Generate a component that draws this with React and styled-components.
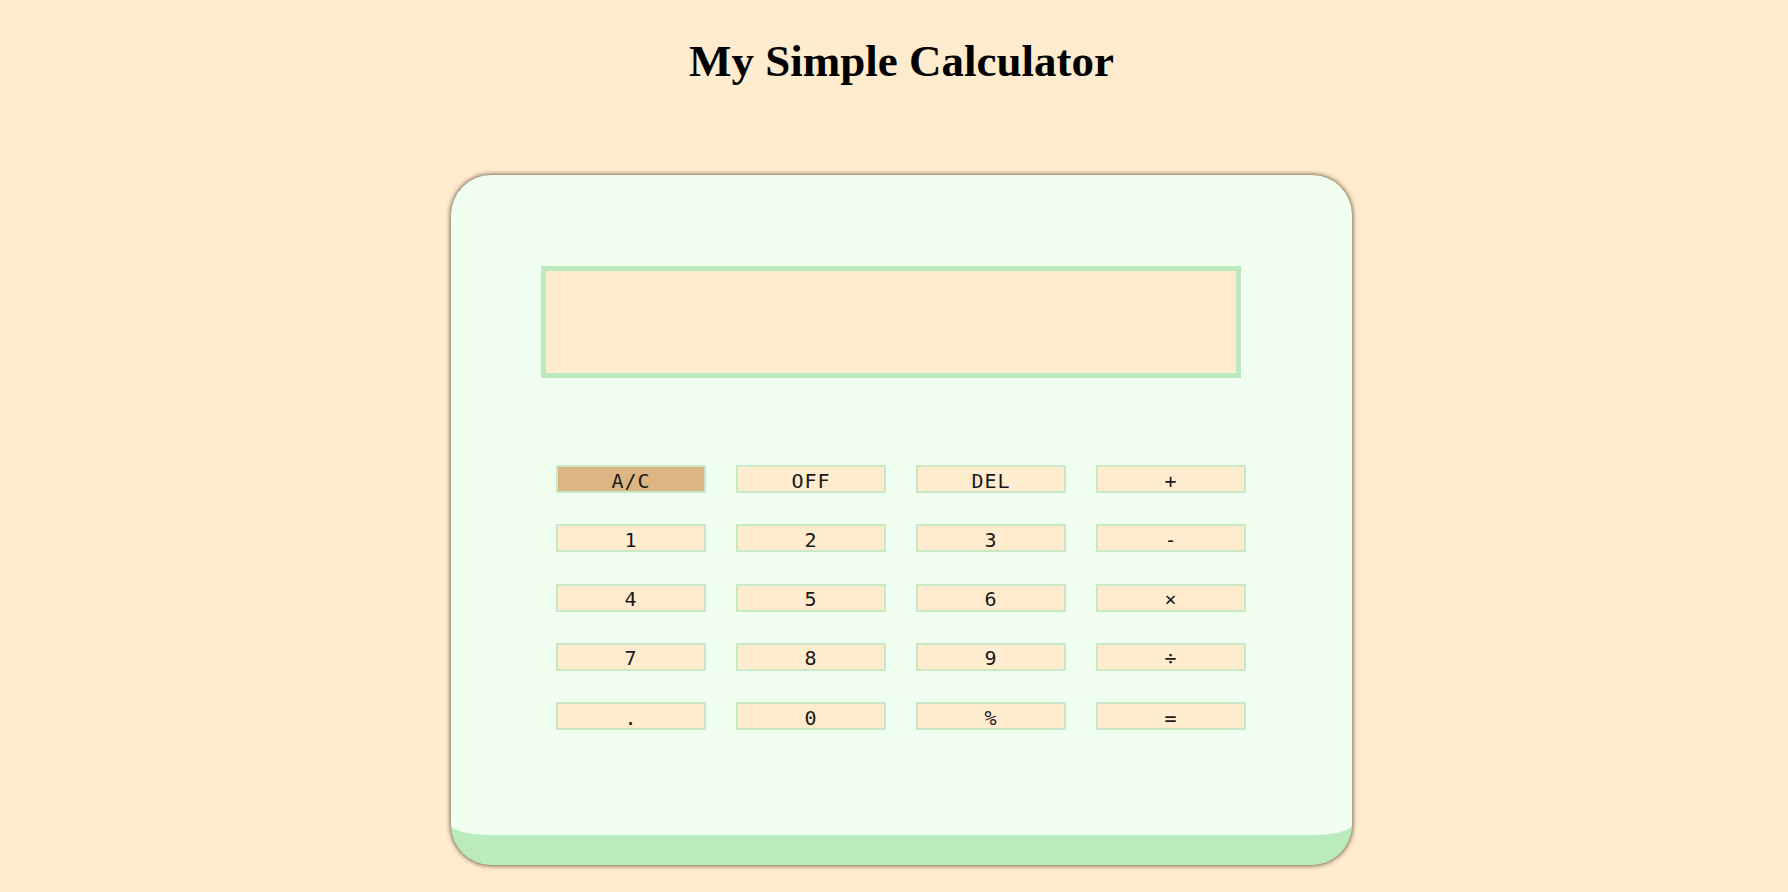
import React from "react";
import styled, { createGlobalStyle } from "styled-components";

const GlobalStyle = createGlobalStyle`
  html, body {
    margin: 0;
    padding: 0;
    background: #ffebcd;
  }
  body {
    font-family: "Liberation Serif", "Times New Roman", serif;
  }
`;

const Page = styled.main`
  box-sizing: border-box;
  width: 100%;
  min-height: 892px;
  padding-left: 15px;
  display: flex;
  flex-direction: column;
  align-items: center;
`;

const Title = styled.h1`
  margin: 35px 0 88px;
  font-family: "Liberation Serif", "Times New Roman", serif;
  font-size: 45px;
  font-weight: 700;
  line-height: 52px;
  color: #000;
`;

const Calculator = styled.section`
  box-sizing: border-box;
  width: 901px;
  height: 690px;
  padding: 91px 0 0 90px;
  background: #f0fff0;
  border-bottom: 30px solid #bbebbc;
  border-radius: 40px;
  box-shadow: 0 0 4px 1px rgba(80, 60, 40, 0.75);
  display: flex;
  flex-direction: column;
  align-items: flex-start;
`;

const Display = styled.div`
  box-sizing: border-box;
  width: 700px;
  height: 112px;
  background: #ffebcd;
  border: 5px solid #bde9be;
`;

const Keypad = styled.div`
  margin: 87px 0 0 15px;
  display: grid;
  grid-template-columns: repeat(4, 150px);
  grid-auto-rows: 28px;
  column-gap: 30px;
  row-gap: 31.25px;
`;

const Key = styled.button`
  box-sizing: border-box;
  height: 28px;
  margin: 0;
  padding: 3px 0 0;
  border: 2px solid #c8e9c6;
  border-radius: 0;
  background: ${(p) => (p.$accent ? "#ddb583" : "#ffebcd")};
  color: #1a1a1a;
  font-family: "DejaVu Sans Mono", "Liberation Mono", monospace;
  font-size: 20px;
  letter-spacing: 1px;
  line-height: 20px;
  text-align: center;
  cursor: pointer;
`;

const keys = [
  "A/C", "OFF", "DEL", "+",
  "1", "2", "3", "-",
  "4", "5", "6", "×",
  "7", "8", "9", "÷",
  ".", "0", "%", "=",
];

export default function App() {
  return (
    <>
      <GlobalStyle />
      <Page>
        <Title>My Simple Calculator</Title>
        <Calculator>
          <Display />
          <Keypad>
            {keys.map((k) => (
              <Key key={k} $accent={k === "A/C"}>
                {k}
              </Key>
            ))}
          </Keypad>
        </Calculator>
      </Page>
    </>
  );
}
